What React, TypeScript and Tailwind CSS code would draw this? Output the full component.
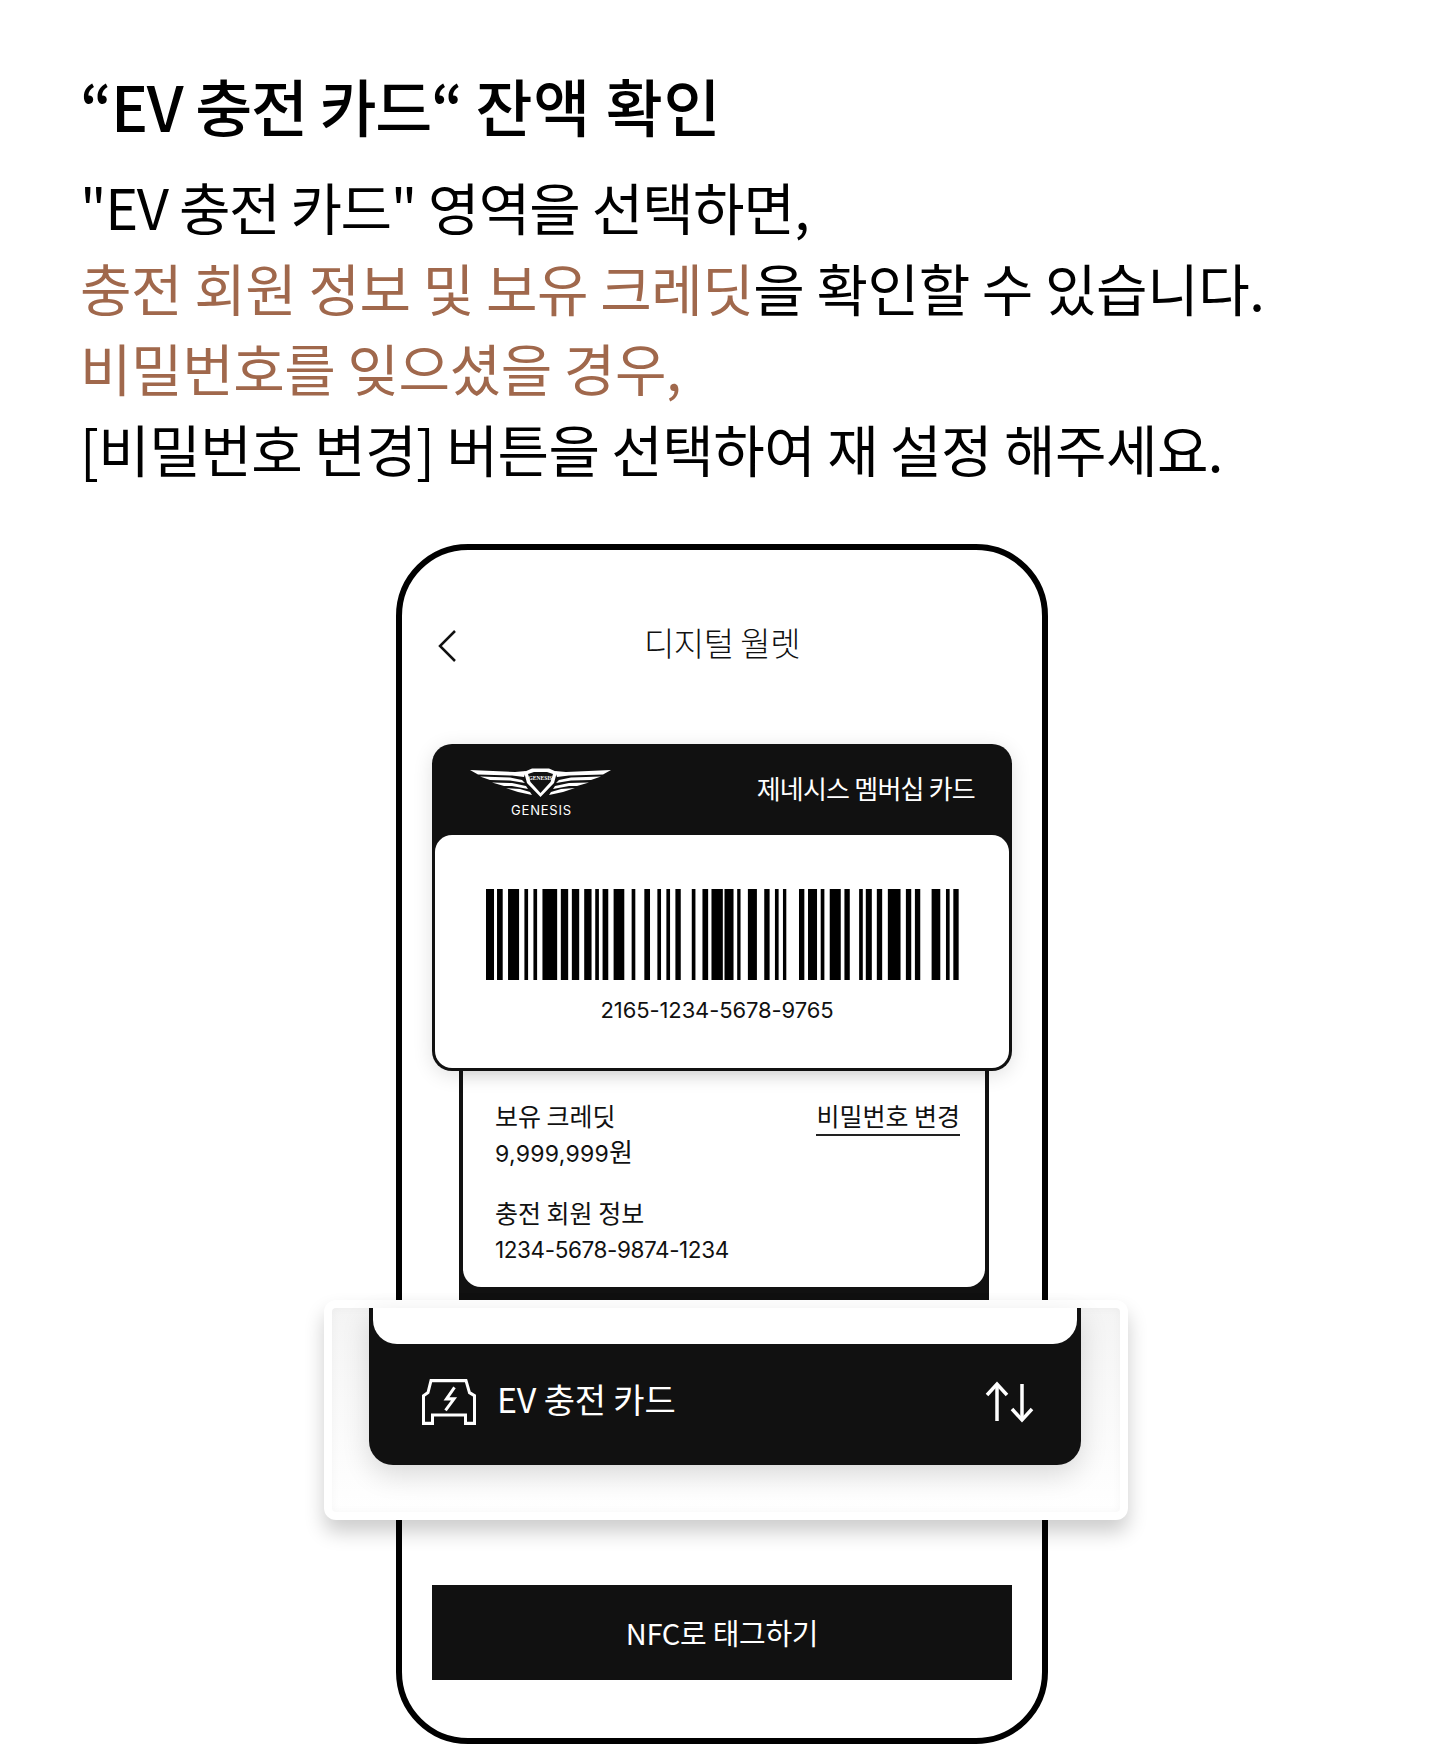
const bars: [number, number][] = [[48,72],[81,98],[114,147],[163,174],[190,201],[217,261],[272,294],[305,327],[342,364],[375,386],[397,414],[430,462],[484,495],[522,539],[561,572],[588,599],[615,631],[664,675],[696,713],[723,757],[762,789],[800,810],[832,859],[881,897],[913,924],[937,947],[985,1001],[1012,1039],[1050,1061],[1077,1110],[1121,1137],[1165,1176],[1185,1203],[1218,1234],[1251,1289],[1305,1321],[1332,1348],[1382,1408],[1425,1436],[1447,1463]];

function Barcode() {
  return (
    <svg width="473" height="91" viewBox="48 57 1416 273" preserveAspectRatio="none">
      {bars.map(([a, b]) => (
        <rect key={a} x={a} y={57} width={b - a} height={273} fill="#000" />
      ))}
    </svg>
  );
}

function Logo() {
  return (
    <svg width="141" height="30" viewBox="0 0 141 30">
      <g fill="#fff">
        <path d="M0 2 L45 4 L56 3 L54 9 L42 7.500 L8 6.500 Z" />
        <path d="M141 2 L96 4 L85 3 L87 9 L99 7.500 L133 6.500 Z" />
        <path d="M10 8.500 L40 9.500 L52 12 L55 15 L40 12.500 L20 12 Z" />
        <path d="M131 8.500 L101 9.500 L89 12 L86 15 L101 12.500 L121 12 Z" />
        <path d="M22 14.500 L42 15 L56 18 L58 21 L42 18 L34 18 Z" />
        <path d="M119 14.500 L99 15 L85 18 L83 21 L99 18 L107 18 Z" />
        <path d="M36 20 L50 21 L60 24 L62 27 L48 24 Z" />
        <path d="M105 20 L91 21 L81 24 L79 27 L93 24 Z" />
        <path fillRule="evenodd" d="M54 4 L62 0.500 H79 L87 4 L84 15 L70.500 29 L57 15 Z M58 6 L60.500 14 L70.500 25 L80.500 14 L83 6 L77 4 H64 Z" />
        <text x="70.500" y="12" textAnchor="middle" fontSize="5.500" fontWeight="700" fontFamily="'Liberation Serif', serif">GENESIS</text>
      </g>
    </svg>
  );
}

function CarIcon() {
  return (
    <svg width="56" height="48" viewBox="0 0 56 46" preserveAspectRatio="none" fill="none" stroke="#fff" strokeWidth="3">
      <path d="M10 2.500 H45 L48.500 14 L53.500 17 V43.500 H44.500 V35.500 H11.500 V43.500 H2.500 V17 L7 14 Z" strokeLinejoin="miter" />
      <path d="M33.500 9 L25.500 20 H33 L24.500 31" strokeWidth="3" />
    </svg>
  );
}

function Arrows() {
  return (
    <svg width="50" height="42" viewBox="0 0 50 42" fill="none" stroke="#fff" strokeWidth="3.500">
      <path d="M12 40 V3" />
      <path d="M2 14 L12 3 L22 14" />
      <path d="M37 3 V39" />
      <path d="M27 28 L37 39 L47 28" />
    </svg>
  );
}

export default function App() {
  return (
    <div className="w-[1440px] h-[1764px] bg-white overflow-hidden text-black font-['Noto_Sans_CJK_KR','Noto_Sans',sans-serif]">
      <div className="pl-[80px] pt-[68px]">
        <h1 className="text-[62px] leading-[74px] font-medium tracking-[-0.008em] font-['Noto_Sans_CJK_KR',sans-serif]">
          <span className="tracking-[-0.02em]">“EV 충전 카드“</span> <span className="tracking-[0.012em]">잔액 확인</span>
        </h1>
        <p className="mt-[24px] text-[56px] leading-[80.500px] tracking-[-0.008em] font-normal">
          <span className="tracking-[-0.024em]">"EV 충전 카드"</span> <span className="tracking-[-0.016em]">영역을 선택하면,</span><br />
          <span className="text-[#a0684c]">충전 회원 정보 및 보유 크레딧</span>을 확인할 수 있습니다.<br />
          <span className="text-[#a0684c]">비밀번호를 잊으셨을 경우,</span><br />
          <span className="tracking-[-0.01em]">[비밀번호 변경] 버튼을 선택하여 재 설정 해주세요.</span>
        </p>
      </div>

      <div className="relative ml-[396px] mt-[56px] w-[652px] h-[1200px] rounded-[72px] border-[6px] border-black bg-white flex flex-col items-center pt-[69px]">
        <div className="relative w-full flex items-center justify-center h-[46px]">
          <svg className="absolute left-[35px] top-[11px]" width="20" height="32" viewBox="0 0 20 32" fill="none" stroke="#111" strokeWidth="2.500">
            <path d="M18 1 L3 16 L18 31" />
          </svg>
          <span className="text-[33px] font-light tracking-[-0.015em] leading-[46px] text-[#111]">디지털 월렛</span>
        </div>

        <div className="relative z-10 mt-[79px] w-[580px] h-[327px] rounded-[20px] bg-[#111] shadow-[0_4px_20px_rgba(0,0,0,0.12)] flex flex-col">
          <div className="h-[91px] flex justify-between pl-[38px] pr-[37px] pt-[24px]">
            <div className="flex flex-col items-center">
              <Logo />
              <span className="mt-[3px] ml-[2px] text-[13px] leading-[18px] tracking-[0.06em] text-white font-['Inter',sans-serif]">GENESIS</span>
            </div>
            <span className="text-white text-[26px] leading-[40px] tracking-[-0.03em] font-normal">제네시스 멤버십 카드</span>
          </div>
          <div className="flex-1 mx-[3px] mb-[3px] rounded-[17px] bg-white flex flex-col items-center pt-[54px]">
            <Barcode />
            <span className="mt-[14px] -ml-[10px] text-[22px] leading-[32px] tracking-[-0.005em] font-['Inter',sans-serif] text-[#111]">2165-1234-5678-9765</span>
          </div>
        </div>

        <div className="ml-[4px] w-[530px] h-[240px] bg-[#111] px-[4px] shrink-0">
          <div className="h-[216px] bg-white rounded-b-[18px] pl-[32px] pr-[25px] pt-[26px] flex justify-between text-[#111] shadow-[inset_0_16px_16px_-14px_rgba(0,0,0,0.1)]">
            <div className="flex flex-col text-[25px] leading-[36px]">
              <span>보유 크레딧</span>
              <span className="font-['Inter',sans-serif] text-[23px] tracking-[0.012em]">9,999,999<span className="font-['Noto_Sans_CJK_KR',sans-serif] text-[26px]">원</span></span>
              <span className="mt-[22px]">충전 회원 정보</span>
              <span className="mt-[2px] font-['Inter',sans-serif] text-[22.500px] tracking-[-0.018em]">1234-5678-9874-1234</span>
            </div>
            <span className="self-start text-[25px] leading-[36px] border-b-2 border-[#222] h-[39px]">비밀번호 변경</span>
          </div>
        </div>

        <div className="absolute z-20 left-[-78px] top-[750px] w-[804px] h-[220px] rounded-[12px] bg-white p-[8px] shadow-[0_12px_20px_rgba(0,0,0,0.2)]">
          <div className="h-full rounded-[4px] bg-gradient-to-b from-[#f4f4f4] to-white pl-[37px] pr-[39px] shadow-[inset_0_0_8px_rgba(0,0,0,0.04)]">
            <div className="h-[157px] rounded-b-[24px] bg-[#111] px-[4px] shadow-[0_10px_28px_rgba(0,0,0,0.14)] flex flex-col">
              <div className="h-[36px] shrink-0 rounded-b-[24px] bg-white" />
              <div className="flex-1 flex items-center justify-between pl-[48px] pr-[42px] pb-[5px]">
                <div className="flex items-center gap-[20px]">
                  <CarIcon />
                  <span className="text-white text-[34px] leading-[44px] tracking-[-0.005em] font-normal -mt-[6px]">EV 충전 카드</span>
                </div>
                <Arrows />
              </div>
            </div>
          </div>
        </div>

        <div className="mt-[274px] w-[580px] h-[95px] bg-[#111] flex items-center justify-center text-white text-[29px] tracking-[-0.01em] font-normal shrink-0">NFC로 태그하기</div>
      </div>
    </div>
  );
}
